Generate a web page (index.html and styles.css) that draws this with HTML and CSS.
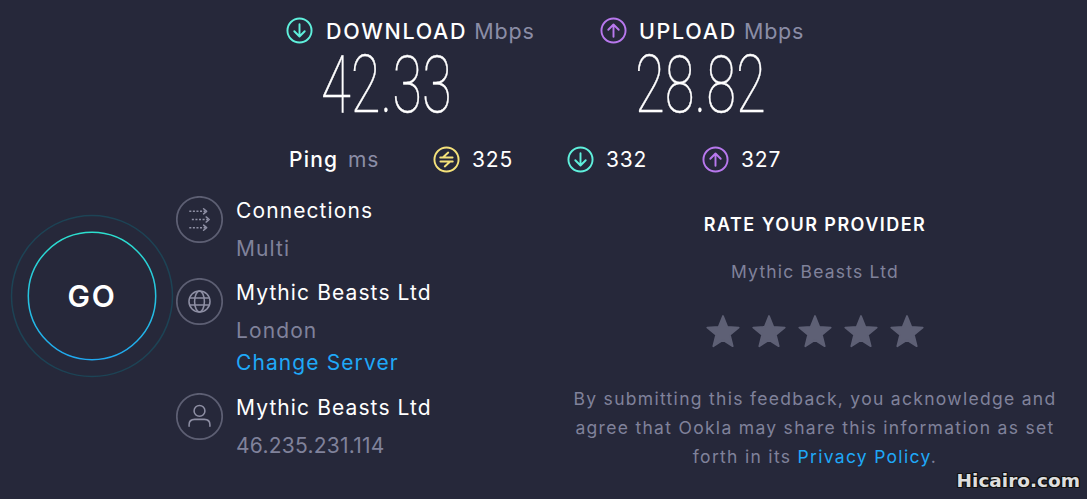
FILE: index.html
```html
<!DOCTYPE html>
<html lang="en">
<head>
<meta charset="utf-8">
<title>Speedtest result</title>
<link rel="stylesheet" href="styles.css">
</head>
<body>
<main class="page">
  <section class="speeds">
    <div class="speed speed-down">
      <div class="speed-head">
        <svg class="ic" viewBox="0 0 28 28"><circle cx="14" cy="14" r="12.5" class="teal"/><path d="M14 7.5V20M8.6 14.8 14 20.2l5.4-5.4" class="teal"/></svg>
        <span class="speed-name">DOWNLOAD</span><span class="unit">Mbps</span>
      </div>
      <div class="speed-value">42.33</div>
    </div>
    <div class="speed speed-up">
      <div class="speed-head">
        <svg class="ic" viewBox="0 0 28 28"><circle cx="14" cy="14" r="12.5" class="purple"/><path d="M14 20.5V8M8.6 13.2 14 7.8l5.4 5.4" class="purple"/></svg>
        <span class="speed-name speed-name-up">UPLOAD</span><span class="unit">Mbps</span>
      </div>
      <div class="speed-value">28.82</div>
    </div>
  </section>

  <section class="ping">
    <div class="ping-label"><span class="ping-name">Ping</span><span class="ping-unit">ms</span></div>
    <div class="ping-item ping-a">
      <svg class="ic" viewBox="0 0 28 28"><circle cx="14" cy="14" r="12.5" class="yellow"/><path d="M7.5 12h12.8M15.8 6.8 10.2 12M20.5 16H7.7M12.2 21.2 17.8 16" class="yellow"/></svg>
      <span>325</span>
    </div>
    <div class="ping-item ping-b">
      <svg class="ic" viewBox="0 0 28 28"><circle cx="14" cy="14" r="12.5" class="teal"/><path d="M14 7.5V20M8.6 14.8 14 20.2l5.4-5.4" class="teal"/></svg>
      <span>332</span>
    </div>
    <div class="ping-item">
      <svg class="ic" viewBox="0 0 28 28"><circle cx="14" cy="14" r="12.5" class="purple"/><path d="M14 20.5V8M8.6 13.2 14 7.8l5.4 5.4" class="purple"/></svg>
      <span>327</span>
    </div>
  </section>

  <section class="lower">
    <div class="go">
      <svg class="go-ring" viewBox="0 0 164 164">
        <defs>
          <linearGradient id="ring" x1="0" y1="0" x2="0" y2="1">
            <stop offset="0" stop-color="#2ce0cf"/>
            <stop offset="1" stop-color="#1fa8f0"/>
          </linearGradient>
        </defs>
        <circle cx="82" cy="82" r="80.5" class="ring-outer"/>
        <circle cx="82" cy="82" r="63.7" class="ring-inner"/>
      </svg>
      <span class="go-text">GO</span>
    </div>

    <div class="info">
      <div class="info-row">
        <svg class="info-ic" viewBox="0 0 46 46">
          <circle cx="23" cy="23" r="22.2" class="ic-ring"/>
          <path d="M13 15h16" class="ic-dash"/><path d="M27 12.500 30 15l-3 2.500" class="ic-line"/>
          <path d="M15.500 23h16" class="ic-dash"/><path d="M29.500 20.500 32.500 23l-3 2.500" class="ic-line"/>
          <path d="M13 31h16" class="ic-dash"/><path d="M27 28.500 30 31l-3 2.500" class="ic-line"/>
        </svg>
        <div class="info-text">
          <div class="line-a">Connections</div>
          <div class="line-b">Multi</div>
        </div>
      </div>
      <div class="info-row">
        <svg class="info-ic" viewBox="0 0 46 46">
          <circle cx="23" cy="23" r="22.2" class="ic-ring"/>
          <circle cx="23" cy="23" r="10.300" class="ic-line"/>
          <ellipse cx="23" cy="23" rx="4.800" ry="10.300" class="ic-line"/>
          <path d="M13.500 19.500h19M13.500 26.500h19" class="ic-line"/>
        </svg>
        <div class="info-text">
          <div class="line-a">Mythic Beasts Ltd</div>
          <div class="line-b">London</div>
          <a class="line-c" href="#">Change Server</a>
        </div>
      </div>
      <div class="info-row">
        <svg class="info-ic" viewBox="0 0 46 46">
          <circle cx="23" cy="23" r="22.2" class="ic-ring"/>
          <circle cx="23" cy="17.500" r="5.300" class="ic-line"/>
          <path d="M12.800 32.500v-1.500c0-3.500 2.500-5.200 5.500-5.200h9.400c3 0 5.500 1.700 5.500 5.200v1.500" class="ic-line"/>
        </svg>
        <div class="info-text">
          <div class="line-a">Mythic Beasts Ltd</div>
          <div class="line-b line-ip">46.235.231.114</div>
        </div>
      </div>
    </div>

    <aside class="rate">
      <h2 class="rate-title">RATE YOUR PROVIDER</h2>
      <p class="rate-name">Mythic Beasts Ltd</p>
      <div class="stars">
        <svg class="star" viewBox="0 0 34 34"><path d="M17 2l4.300 10.800 11.400.8-8.800 7.300 2.800 11.300L17 25.900 7.300 32.200l2.800-11.300-8.800-7.300 11.400-.8z"/></svg>
        <svg class="star" viewBox="0 0 34 34"><path d="M17 2l4.300 10.800 11.400.8-8.800 7.300 2.800 11.300L17 25.900 7.300 32.200l2.800-11.300-8.800-7.300 11.400-.8z"/></svg>
        <svg class="star" viewBox="0 0 34 34"><path d="M17 2l4.300 10.800 11.400.8-8.800 7.300 2.800 11.300L17 25.900 7.300 32.200l2.800-11.300-8.800-7.300 11.400-.8z"/></svg>
        <svg class="star" viewBox="0 0 34 34"><path d="M17 2l4.300 10.800 11.400.8-8.800 7.300 2.800 11.300L17 25.900 7.300 32.200l2.800-11.300-8.800-7.300 11.400-.8z"/></svg>
        <svg class="star" viewBox="0 0 34 34"><path d="M17 2l4.300 10.800 11.400.8-8.800 7.300 2.800 11.300L17 25.900 7.300 32.200l2.800-11.300-8.800-7.300 11.400-.8z"/></svg>
      </div>
      <p class="rate-note">By submitting this feedback, you acknowledge and agree that Ookla may share this information as set forth in its <a href="#">Privacy Policy</a>.</p>
    </aside>
  </section>

  <div class="watermark">Hicairo.com</div>
</main>
</body>
</html>
```

FILE: styles.css
```css
* { box-sizing: border-box; }

html, body {
  margin: 0;
  height: 100%;
  background: #26283a;
  overflow: hidden;
}

.page {
  position: relative;
  height: 499px;
  color: #fff;
  font-family: "Inter", "Noto Sans", sans-serif;
}

.ic {
  width: 27px;
  height: 27px;
  flex: none;
}

.ic circle, .ic path {
  fill: none;
  stroke-width: 2;
  stroke-linecap: round;
  stroke-linejoin: round;
}

.teal { stroke: #5ff0dc; }
.purple { stroke: #b878ee; }
.yellow { stroke: #f5e27a; }

/* speeds */
.speeds {
  display: flex;
  padding: 17px 0 0 286px;
}

.speed-down { width: 314px; }

.speed-head {
  display: flex;
  align-items: center;
  height: 27px;
  font-size: 21.500px;
  line-height: 22px;
}

.speed-name {
  margin-left: 13px;
  font-weight: 500;
  letter-spacing: 1.700px;
}

.speed-name-up { margin-left: 12px; }

.unit {
  margin-left: 7px;
  color: #8b8da6;
  letter-spacing: 0.8px;
}

.speed-value {
  height: 102px;
  margin-left: 35px;
  padding-top: 12px;
  font-family: "Roboto", sans-serif;
  font-weight: 100;
  font-size: 80px;
  line-height: 58px;
  -webkit-text-stroke: 0.4px #fff;
  transform: scaleX(0.68);
  transform-origin: left center;
}

/* ping */
.ping {
  display: flex;
  align-items: center;
  height: 27px;
  padding-left: 289px;
  font-size: 21px;
  letter-spacing: 0.8px;
}

.ping-label {
  display: flex;
  width: 144px;
}

.ping-name { width: 59px; font-weight: 500; letter-spacing: 1.2px; }
.ping-unit { color: #8b8da6; }

.ping-item {
  display: flex;
  align-items: center;
  gap: 12px;
}

.ping-a { width: 134px; }
.ping-b { width: 135px; }

/* lower */
.lower {
  display: flex;
  margin-top: 13px;
}

.go {
  position: relative;
  flex: none;
  display: flex;
  align-items: center;
  justify-content: center;
  width: 164px;
  height: 164px;
  margin: 28px 0 0 10px;
}

.go-ring {
  position: absolute;
  inset: 0;
  width: 164px;
  height: 164px;
}

.go-ring circle { fill: none; }
.ring-outer { stroke: #1d4355; stroke-width: 1.500; }
.ring-inner { stroke: url(#ring); stroke-width: 1.500; }

.go-text {
  font-size: 30px;
  font-weight: 600;
  letter-spacing: 1.700px;
}

.info {
  flex: none;
  width: 380px;
  margin-left: 2px;
  padding-top: 10px;
}

.info-row {
  display: flex;
  align-items: flex-start;
  gap: 13px;
  margin-bottom: 16px;
}

.info-row:first-child { margin-bottom: 15px; }

.info-ic {
  flex: none;
  width: 47px;
  height: 47px;
}

.info-ic * { fill: none; }
.ic-ring { stroke: #5d5f73; stroke-width: 1.700; }
.ic-line { stroke: #8e8fa4; stroke-width: 1.500; stroke-linecap: round; stroke-linejoin: round; }
.ic-dash { stroke: #8e8fa4; stroke-width: 1.500; stroke-dasharray: 2 1.500; }

.info-text {
  padding-top: 1px;
  font-size: 21px;
  line-height: 28px;
  letter-spacing: 1.100px;
}

.line-a { height: 28px; }
.line-b { height: 38px; padding-top: 10px; color: #80829b; }
.line-ip { letter-spacing: 0.25px; }

.line-c {
  display: block;
  margin-top: 4px;
  color: #1fa8f8;
  text-decoration: none;
}

/* rate */
.rate {
  flex: none;
  width: 500px;
  margin-left: 9px;
  padding-top: 27px;
  text-align: center;
}

.rate-title {
  margin: 0;
  font-size: 18px;
  font-weight: 600;
  line-height: 24px;
  letter-spacing: 1.450px;
}

.rate-name {
  margin: 23px 0 0;
  font-size: 17.500px;
  line-height: 24px;
  letter-spacing: 1.200px;
  color: #80829b;
}

.stars {
  display: flex;
  justify-content: center;
  gap: 12px;
  margin-top: 30px;
}

.star {
  width: 34px;
  height: 34px;
  fill: #5e6075;
  stroke: #5e6075;
  stroke-width: 1.800;
  stroke-linejoin: round;
}

.rate-note {
  margin: 36px auto 0;
  width: 500px;
  font-size: 17.500px;
  line-height: 29px;
  letter-spacing: 1.300px;
  color: #80829b;
}

.rate-note a {
  color: #1fa8f8;
  text-decoration: none;
}

/* watermark */
.watermark {
  position: absolute;
  right: 7px;
  bottom: 8px;
  font-family: "DejaVu Sans", sans-serif;
  font-size: 18.500px;
  font-weight: 700;
  line-height: 20px;
  color: #dedede;
  text-shadow: 1px 0 0 #111, -1px 0 0 #111, 0 1px 0 #111, 0 -1px 0 #111, 1px 1px 0 #111, -1px -1px 0 #111, 1px -1px 0 #111, -1px 1px 0 #111;
}
```
